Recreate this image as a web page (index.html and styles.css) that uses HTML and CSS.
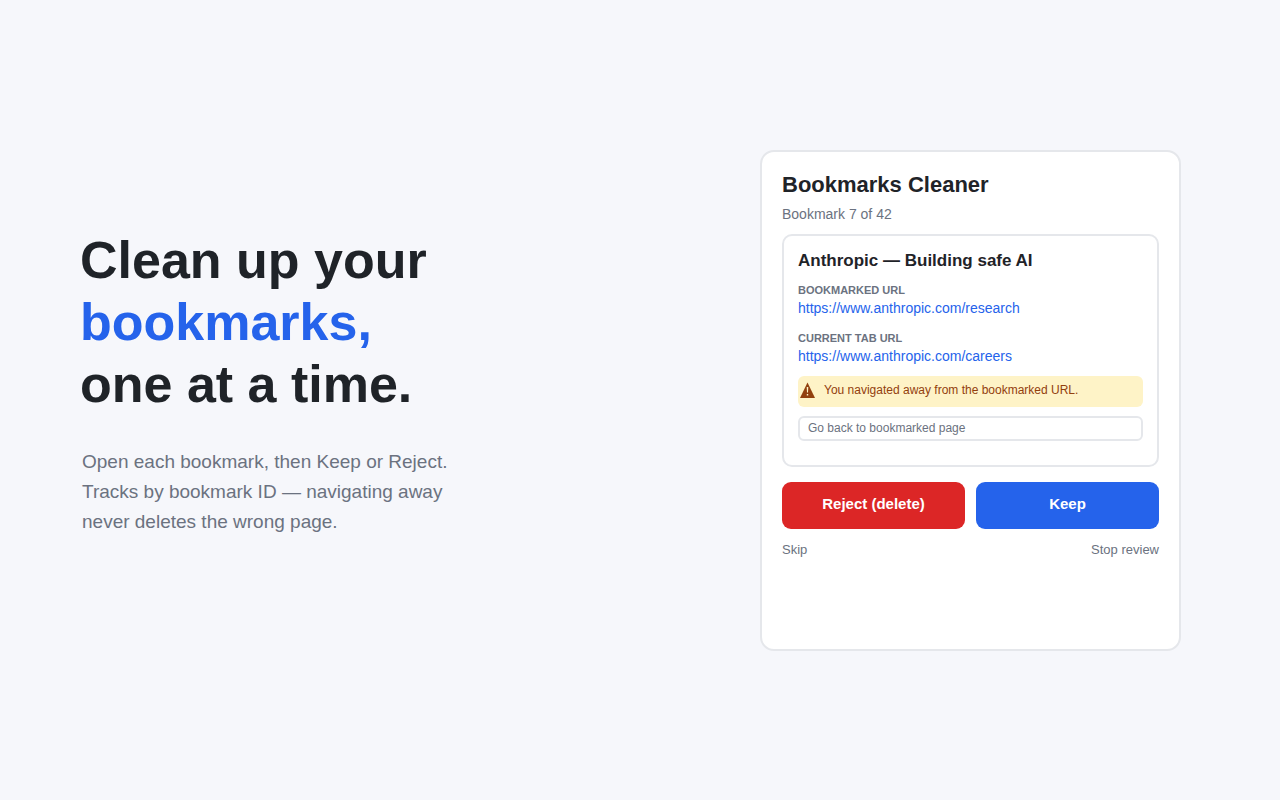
FILE: index.html
```html
<!DOCTYPE html>
<html lang="en">
<head>
    <meta charset="UTF-8">
    <meta name="viewport" content="width=device-width, initial-scale=1.0">
    <title>Bookmarks Cleaner</title>
    <link rel="stylesheet" href="styles.css">
</head>
<body>
<main class="page">
    <section class="hero">
        <h1>Clean up your<br><span class="accent">bookmarks,</span><br>one at a time.</h1>
        <p>Open each bookmark, then Keep or Reject.<br>Tracks by bookmark ID — navigating away<br>never deletes the wrong page.</p>
    </section>

    <section class="popup">
        <h2>Bookmarks Cleaner</h2>
        <p class="progress">Bookmark 7 of 42</p>

        <div class="bookmark">
            <h3>Anthropic — Building safe AI</h3>
            <dl class="urls">
                <dt>BOOKMARKED URL</dt>
                <dd><a href="https://www.anthropic.com/research">https://www.anthropic.com/research</a></dd>
                <dt>CURRENT TAB URL</dt>
                <dd><a href="https://www.anthropic.com/careers">https://www.anthropic.com/careers</a></dd>
            </dl>
            <div class="warning" role="alert">
                <svg width="16" height="16" viewBox="0 0 16 16" aria-hidden="true">
                    <path d="M7.5 0.5 L15 16 H0 Z" fill="#92400e"/>
                    <path d="M6.7 5 H8.3 L8 10.5 H7 Z M6.8 12 H8.2 V13.4 H6.8 Z" fill="#fef3c7"/>
                </svg>
                <span>You navigated away from the bookmarked URL.</span>
            </div>
            <button type="button" class="go-back">Go back to bookmarked page</button>
        </div>

        <div class="actions">
            <button type="button" class="btn reject">Reject (delete)</button>
            <button type="button" class="btn keep">Keep</button>
        </div>
        <div class="secondary">
            <button type="button">Skip</button>
            <button type="button">Stop review</button>
        </div>
    </section>
</main>
</body>
</html>
```
FILE: styles.css
```css
* {
    box-sizing: border-box;
}
body {
    font-family: "Liberation Sans", Arial, sans-serif;
    margin: 0;
    color: #1f2328;
    background-color: #f6f7fb;
}
h1, h2, h3, p, dl, dd {
    margin: 0;
}
button {
    font-family: inherit;
    cursor: pointer;
}
.page {
    display: flex;
    align-items: center;
    justify-content: space-between;
    gap: 40px;
    min-height: 100vh;
    padding: 0 99px 0 80px;
}
.hero {
    padding-bottom: 34px;
}
.hero h1 {
    font-size: 52px;
    line-height: 62px;
    margin-bottom: 32px;
}
.hero .accent {
    color: #2563eb;
}
.hero p {
    padding-left: 2px;
    font-size: 19px;
    line-height: 30px;
    color: #6b7280;
}
.popup {
    width: 100%;
    max-width: 421px;
    padding: 20px 20px 92px;
    background-color: #fff;
    border: 2px solid #e5e7eb;
    border-radius: 14px;
}
.popup h2 {
    font-size: 22px;
    line-height: 26px;
    margin-bottom: 8px;
}
.progress {
    font-size: 14px;
    line-height: 16px;
    margin-bottom: 12px;
    color: #6b7280;
}
.bookmark {
    padding: 14px 14px 24px;
    border: 2px solid #e5e7eb;
    border-radius: 10px;
}
.bookmark h3 {
    font-size: 17px;
    line-height: 22px;
    margin-bottom: 12px;
}
.urls dt {
    font-size: 11px;
    font-weight: bold;
    line-height: 12px;
    margin-bottom: 4px;
    color: #6b7280;
}
.urls dd {
    font-size: 14px;
    line-height: 16px;
    margin-bottom: 16px;
}
.urls dd:last-child {
    margin-bottom: 12px;
}
.urls a {
    color: #2563eb;
    text-decoration: none;
}
.warning {
    display: flex;
    align-items: center;
    gap: 8px;
    padding: 6px 2px 9px;
    margin-bottom: 9px;
    font-size: 12px;
    line-height: 16px;
    color: #92400e;
    background-color: #fef3c7;
    border-radius: 6px;
}
.go-back {
    display: block;
    width: 100%;
    padding: 3px 8px 4px;
    font-size: 12px;
    line-height: 14px;
    text-align: left;
    color: #6b7280;
    background-color: #fff;
    border: 2px solid #e5e7eb;
    border-radius: 6px;
}
.actions {
    display: flex;
    gap: 11px;
    margin: 15px 0 13px;
}
.btn {
    flex: 1;
    padding: 13px 0 16px;
    font-size: 15px;
    font-weight: bold;
    line-height: 18px;
    color: #fff;
    border: none;
    border-radius: 9px;
}
.reject {
    background-color: #dc2626;
}
.keep {
    background-color: #2563eb;
}
.secondary {
    display: flex;
    justify-content: space-between;
}
.secondary button {
    padding: 0;
    font-size: 13px;
    line-height: 15px;
    color: #6b7280;
    background: none;
    border: none;
}
```
